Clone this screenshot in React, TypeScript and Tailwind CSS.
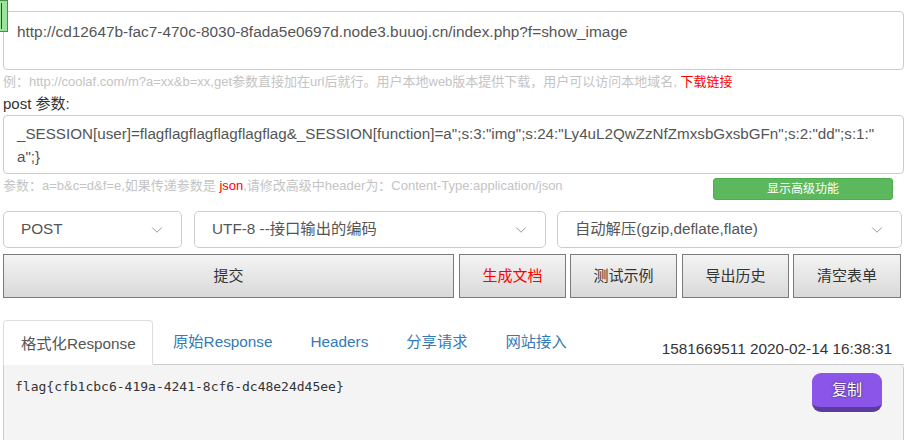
import { ChevronDown } from 'lucide-react';

const sans = "font-['Liberation_Sans','Noto_Sans_CJK_SC',sans-serif]";

const Select = ({ label, className }: { label: string; className: string }) => (
  <div
    className={`flex items-center justify-between h-[37px] rounded-[5px] border border-[#ccc] bg-white pl-[17px] pr-[15px] text-[15.3px] text-[#555] ${className}`}
  >
    <span>{label}</span>
    <ChevronDown className="w-[18px] h-[18px] text-[#777]" strokeWidth={1} />
  </div>
);

const GrayButton = ({ label, className, red }: { label: string; className: string; red?: boolean }) => (
  <button
    className={`h-[44px] border border-[#7a7a7a] bg-gradient-to-b from-[#f4f4f4] to-[#d9d9d9] text-[15px] ${red ? 'text-[#ff0000]' : 'text-[#333]'} ${className}`}
  >
    {label}
  </button>
);

const tabs = ['原始Response', 'Headers', '分享请求', '网站接入'];

const postBody = '_SESSION[user]=flagflagflagflagflagflag&_SESSION[function]=a";s:3:"img";s:24:"Ly4uL2QwZzNfZmxsbGxsbGFn";s:2:"dd";s:1:"';

export default function App() {
  return (
    <div className={`relative w-[913px] h-[440px] overflow-hidden bg-white ${sans}`}>
      {/* side tab peeking in from the left */}
      <div className="absolute left-0 top-0 w-[8px] h-[32px] bg-[#9be49b] border border-[#4a8a4a] border-l-0 overflow-hidden">
        <div className="mt-[2px] ml-[1px] w-[5px] h-[26px] border-l border-[#444]" />
      </div>

      <div className="pl-[3px] pt-[11px] w-[904px]">
        <div className="h-[59px] rounded-[4px] border border-[#ccc] px-[13px] pt-[8px] text-[15.4px] text-[#555]">
          http://cd12647b-fac7-470c-8030-8fada5e0697d.node3.buuoj.cn/index.php?f=show_image
        </div>

        <div className="mt-[4px] h-[16px] text-[13px] leading-[16px] text-[#c4c4c4]">
          例：http://coolaf.com/m?a=xx&amp;b=xx,get参数直接加在url后就行。用户本地web版本提供下载，用户可以访问本地域名, <span className="text-[#ff0000]">下载链接</span>
        </div>

        <div className="mt-[3px] h-[21px] text-[15px] leading-[21px] text-[#333]">post 参数:</div>

        <div className="mt-[1px] h-[59px] rounded-[4px] border border-[#ccc] px-[13px] pt-[6px] text-[15.2px] leading-[23px] text-[#555]">
          {postBody}
          <br />
          {'a";}'}
        </div>

        <div className="flex items-start justify-between h-[26px]">
          <div className="mt-[4px] text-[13px] leading-[16px] text-[#c4c4c4]">
            参数：a=b&amp;c=d&amp;f=e,如果传递参数是 <span className="text-[#ff0000]">json</span>,请修改高级中header为：Content-Type:application/json
          </div>
          <button className="mt-[4px] mr-[11px] w-[180px] h-[22px] rounded-[3px] bg-[#5cb85c] border border-[#4cae4c] text-[12px] text-white">
            显示高级功能
          </button>
        </div>

        <div className="mt-[11px] flex">
          <Select label="POST" className="w-[179px]" />
          <Select label="UTF-8 --接口输出的编码" className="ml-[12px] w-[352px]" />
          <Select label="自动解压(gzip,deflate,flate)" className="ml-[11px] w-[345px]" />
        </div>

        <div className="mt-[6px] flex">
          <GrayButton label="提交" className="w-[451px]" />
          <GrayButton label="生成文档" red className="ml-[5px] w-[107px]" />
          <GrayButton label="测试示例" className="ml-[4px] w-[107px]" />
          <GrayButton label="导出历史" className="ml-[5px] w-[107px]" />
          <GrayButton label="清空表单" className="ml-[4px] w-[108px]" />
        </div>

        <div className="mt-[22px] flex items-end border-b border-[#ccc] h-[45px]">
          <div className="h-[45px] w-[150px] -mb-[1px] rounded-t-[4px] border border-[#ddd] border-b-white bg-white pl-[17px] pt-[12px] text-[15.3px] text-[#555]">
            格式化Response
          </div>
          {tabs.map((t, i) => (
            <div
              key={t}
              className={`h-[45px] pt-[12px] text-[15.3px] text-[#337ab7] ${['ml-[20px]', 'ml-[38px]', 'ml-[38px]', 'ml-[38px]'][i]}`}
            >
              {t}
            </div>
          ))}
          <div className="ml-auto mr-[12px] pb-[3px] text-[15.3px] text-[#333]">1581669511 2020-02-14 16:38:31</div>
        </div>

        <div className="relative h-[80px] rounded-tr-[4px] border border-t-0 border-[#ccc] bg-[#f4f4f4] pl-[11px] pt-[13px]">
          <div className="font-['DejaVu_Sans_Mono',monospace] text-[13px] leading-[18px] text-[#333]">
            {'flag{cfb1cbc6-419a-4241-8cf6-dc48e24d45ee}'}
          </div>
          <button className="absolute right-[21px] top-[8px] w-[70px] h-[39px] rounded-[9px] bg-[#8a55e8] border-b-[5px] border-[#5a3b9e] text-[15px] text-white [text-shadow:0_0_2px_#222]">
            复制
          </button>
        </div>
      </div>
    </div>
  );
}
